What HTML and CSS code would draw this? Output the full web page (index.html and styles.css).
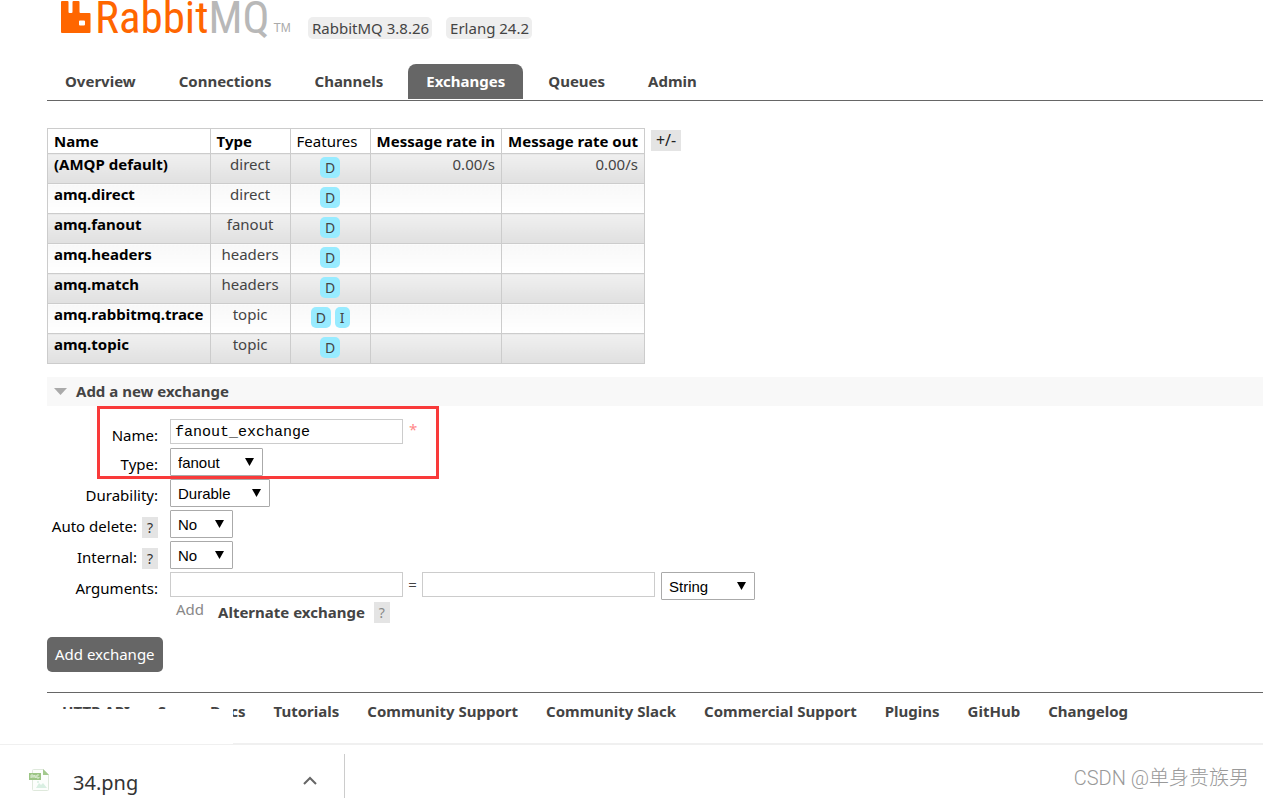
FILE: index.html
```html
<!DOCTYPE html>
<html lang="en">
<head>
<meta charset="utf-8">
<title>RabbitMQ Management</title>
<link rel="stylesheet" href="styles.css">
</head>
<body>
<div class="page">
  <header class="header">
    <a class="logo" href="#" aria-label="RabbitMQ">
      <svg class="logo-mark" viewBox="0 0 30 33" aria-hidden="true"><path fill="#f60" fill-rule="evenodd" d="M1 1h5.500q1 0 1 1v10q0 1 1 1h2q1 0 1-1V2q0-1 1-1h5q1 0 1 1v10q0 1 1 1h9q1 0 1 1v18q0 1-1 1H1q-1 0-1-1V2q0-1 1-1zM19 20.500q-1 0-1 1v3q0 1 1 1h4q1 0 1-1v-3q0-1-1-1z"/></svg>
      <span class="logo-rabbit">Rabbit</span><span class="logo-mq">MQ</span><span class="logo-tm">TM</span>
    </a>
    <span class="version">RabbitMQ 3.8.26</span>
    <span class="version">Erlang 24.2</span>
  </header>
  <nav class="tabs">
    <a href="#">Overview</a>
    <a href="#">Connections</a>
    <a href="#">Channels</a>
    <a href="#" class="selected">Exchanges</a>
    <a href="#">Queues</a>
    <a href="#">Admin</a>
  </nav>
  <main class="main">
    <div class="listing">
      <table class="exchanges">
        <thead><tr><th>Name</th><th>Type</th><th class="plain">Features</th><th>Message rate in</th><th>Message rate out</th></tr></thead>
        <tbody>
          <tr><td><a href="#">(AMQP default)</a></td><td class="c">direct</td><td class="c"><span class="tag">D</span></td><td class="r">0.00/s</td><td class="r">0.00/s</td></tr>
          <tr><td><a href="#">amq.direct</a></td><td class="c">direct</td><td class="c"><span class="tag">D</span></td><td></td><td></td></tr>
          <tr><td><a href="#">amq.fanout</a></td><td class="c">fanout</td><td class="c"><span class="tag">D</span></td><td></td><td></td></tr>
          <tr><td><a href="#">amq.headers</a></td><td class="c">headers</td><td class="c"><span class="tag">D</span></td><td></td><td></td></tr>
          <tr><td><a href="#">amq.match</a></td><td class="c">headers</td><td class="c"><span class="tag">D</span></td><td></td><td></td></tr>
          <tr><td><a href="#">amq.rabbitmq.trace</a></td><td class="c">topic</td><td class="c"><span class="tag">D</span> <span class="tag">I</span></td><td></td><td></td></tr>
          <tr><td><a href="#">amq.topic</a></td><td class="c">topic</td><td class="c"><span class="tag">D</span></td><td></td><td></td></tr>
        </tbody>
      </table>
      <button class="columns" type="button">+/-</button>
    </div>
    <h2 class="section"><svg class="fold" viewBox="0 0 13 7" aria-hidden="true"><path fill="#aaa" d="M0 0h13L6.500 7z"/></svg>Add a new exchange</h2>
    <form class="form">
      <div class="highlight"></div>
      <div class="fields">
        <div class="label"><label for="name">Name:</label></div>
        <div class="field"><input id="name" type="text" value="fanout_exchange" spellcheck="false"><span class="mand">*</span></div>
        <div class="label"><label for="type">Type:</label></div>
        <div class="field"><span class="select medium"><select id="type"><option>fanout</option></select></span></div>
        <div class="label"><label for="durability">Durability:</label></div>
        <div class="field"><span class="select wide"><select id="durability"><option>Durable</option></select></span></div>
        <div class="label"><label for="autodelete">Auto delete:</label><button class="help" type="button">?</button></div>
        <div class="field"><span class="select short"><select id="autodelete"><option>No</option></select></span></div>
        <div class="label"><label for="internal">Internal:</label><button class="help" type="button">?</button></div>
        <div class="field"><span class="select short"><select id="internal"><option>No</option></select></span></div>
        <div class="label"><label for="argkey">Arguments:</label></div>
        <div class="field"><input id="argkey" type="text"><span class="equals">=</span><input type="text" aria-label="Argument value"><span class="select argtype"><select aria-label="Argument type"><option>String</option></select></span></div>
        <div class="shortcuts"><span class="add">Add</span><button class="link" type="button">Alternate exchange</button><button class="help dim" type="button">?</button></div>
      </div>
      <button class="submit" type="submit">Add exchange</button>
    </form>
  </main>
  <footer class="footer">
    <a href="#">HTTP API</a>
    <a href="#">Server Docs</a>
    <a href="#">Tutorials</a>
    <a href="#">Community Support</a>
    <a href="#">Community Slack</a>
    <a href="#">Commercial Support</a>
    <a href="#">Plugins</a>
    <a href="#">GitHub</a>
    <a href="#">Changelog</a>
  </footer>
</div>
<div class="downloads">
  <div class="status"></div>
  <div class="item">
    <svg class="file" viewBox="0 0 22 24" aria-hidden="true"><path fill="#fcfefc" stroke="#dfe9dc" d="M4.500 1.500h10l5 5v15q0 1-1 1h-14q-1 0-1-1v-19q0-1 1-1z"/><path fill="#a3c98d" d="M14 1l6 6h-6z"/><path fill="#d9efe2" d="M7 20l3-5 2 2 2-2 4 5z"/><circle cx="9" cy="14" r="1" fill="#d9efe2"/><path fill="#9cc585" d="M0 5h12v7H0z"/><path fill="none" stroke="#dcecd4" d="M2 10V7h2v2H2M5 10V7l2 3V7M10 7H8v3h2V9"/></svg>
    <span>34.png</span>
    <svg class="chevron" viewBox="0 0 14 9" aria-hidden="true"><path fill="none" stroke="#666" stroke-width="2" d="M1 8l6-6 6 6"/></svg>
  </div>
  <span class="watermark">CSDN @单身贵族男</span>
</div>
</body>
</html>
```
FILE: styles.css
```css
* { box-sizing: border-box; }
body {
  margin: 0;
  min-height: 100vh;
  display: flex;
  flex-direction: column;
  background: #fff;
  color: #444;
  font: 15px/22px "Noto Sans", sans-serif;
}
a { color: inherit; text-decoration: none; }
button { font: inherit; color: inherit; border: 0; padding: 0; cursor: pointer; }
.page { flex: 1; padding-left: 47px; }

.header { display: flex; align-items: flex-start; gap: 14px; height: 64px; padding-left: 14px; }
.header .version { margin-top: 17px; padding: 0 3px 0 4px; border-radius: 5px; background: #eee; }
.logo { display: flex; align-items: flex-start; width: 233px; line-height: 36px; white-space: nowrap; }
.logo-mark { width: 30px; height: 33px; margin-right: 4px; }
.logo-rabbit, .logo-mq { font-family: "Liberation Sans Narrow", "Roboto Condensed", "DejaVu Sans Condensed", sans-serif; font-size: 45px; color: #f60; }
.logo-mq { color: #b8b8b8; }
.logo-tm { margin: 10px 0 0 4px; font: 12px/36px "Liberation Sans", sans-serif; color: #aaa; }

.tabs { display: flex; gap: 7px; border-bottom: 1px solid #666; padding-bottom: 1px; font-weight: bold; }
.tabs a { padding: 6px 18px 7px; border-radius: 8px 8px 0 0; }
.tabs .selected { background: #666; color: #fff; }

.listing { display: flex; align-items: flex-start; gap: 6px; margin: 27px 0 13px; }
.exchanges { border-collapse: collapse; color: #000; }
.exchanges th, .exchanges td { border: 1px solid #ccc; padding: 0 6px; text-align: left; vertical-align: top; }
.exchanges th { height: 25px; padding-top: 1px; }
.exchanges .plain { font-weight: normal; }
.exchanges th:nth-child(2), .exchanges th:nth-child(3) { width: 80px; }
.exchanges td { height: 30px; background: linear-gradient(#f0f0f0, #e0e0e0); color: #444; line-height: 20px; }
.exchanges tr:nth-child(even) td { background: linear-gradient(#f8f8f8, #fff); }
.exchanges td a { color: #000; font-weight: bold; }
.exchanges td.c { text-align: center; }
.exchanges td.r { text-align: right; }
.tag { display: inline-block; margin-top: 3px; padding: 0 5px; border-radius: 5px; background: #98ebff; font-size: 14px; line-height: 21px; }
.columns { margin-top: 2px; padding: 0 5px; background: #e4e4e4; font-size: 16px; line-height: 21px; color: #222; }

.section { display: flex; align-items: center; margin: 0; padding: 3px 7px 4px; background: #f8f8f8; font-size: 15px; line-height: 22px; }
.fold { width: 13px; height: 7px; margin-right: 9px; }

.form { position: relative; padding: 13px 0 20px; }
.highlight { position: absolute; left: 50px; top: 0; width: 342px; height: 73px; border: 3px solid #f93a3a; pointer-events: none; z-index: 1; }
.fields { display: grid; grid-template-columns: 111px 1fr; column-gap: 12px; row-gap: 3px; margin-bottom: 14px; color: #000; }
.label { display: flex; justify-content: flex-end; gap: 5px; padding-top: 6px; line-height: 20px; white-space: nowrap; }
.field { display: flex; align-items: flex-start; }
.field input { width: 233px; height: 25px; border: 1px solid #ccc; padding: 2px 4px 0; font: 15px "Liberation Mono", monospace; color: #000; }
.mand { padding-left: 6px; color: #f88; line-height: 20px; }
.equals { width: 19px; text-align: center; color: #444; line-height: 25px; }
.help { align-self: center; width: 16px; background: #e4e4e4; line-height: 21px; color: #333; font-size: 14px; }
.dim { color: #888; }
.select { position: relative; }
.select::after { content: ""; position: absolute; right: 9px; top: 10px; width: 9px; height: 8px; background: #000; clip-path: polygon(0 0, 100% 0, 50% 100%); pointer-events: none; }
.select select { appearance: none; width: 100%; height: 28px; display: block; border: 1px solid #aaa; border-radius: 1px; padding: 0 7px; background: #fff; color: #000; font: 15px "Liberation Sans", sans-serif; }
.short { width: 63px; }
.medium { width: 93px; }
.wide { width: 100px; }
.argtype { width: 94px; margin-left: 6px; }
.shortcuts { grid-column: 2; display: flex; align-items: flex-start; padding-left: 6px; color: #444; margin-top: -5px; }
.add { color: #888; }
.link { margin: 3px 9px 0 14px; background: none; font-weight: bold; color: #444; }
.shortcuts .help { margin-top: 3px; }
.submit { padding: 6px 8px 7px; border-radius: 5px; background: #666; color: #fff; }

.footer { display: flex; flex-wrap: wrap; column-gap: 28px; border-top: 1px solid #666; padding: 7px 15px 0; font-weight: bold; }

.downloads { position: relative; display: flex; justify-content: space-between; align-items: flex-start; height: 55px; border-top: 2px solid #f0f0f0; padding: 9px 14px 0 0; background: #fff; }
.status { position: absolute; left: 0; top: -36px; width: 233px; height: 36px; border-bottom: 1px solid #f0f0f0; background: #fff; }
.item { display: flex; align-items: center; width: 345px; height: 44px; border-right: 1px solid #ccc; padding: 14px 27px 0 29px; color: #333; font-size: 20px; }
.file { width: 22px; height: 24px; margin: -6px 22px 0 0; }
.chevron { width: 14px; height: 9px; margin: -6px 0 0 auto; }
.watermark { margin-top: 12px; color: #999; font: 300 20px/24px Roboto, "Noto Sans CJK SC", sans-serif; }
```
